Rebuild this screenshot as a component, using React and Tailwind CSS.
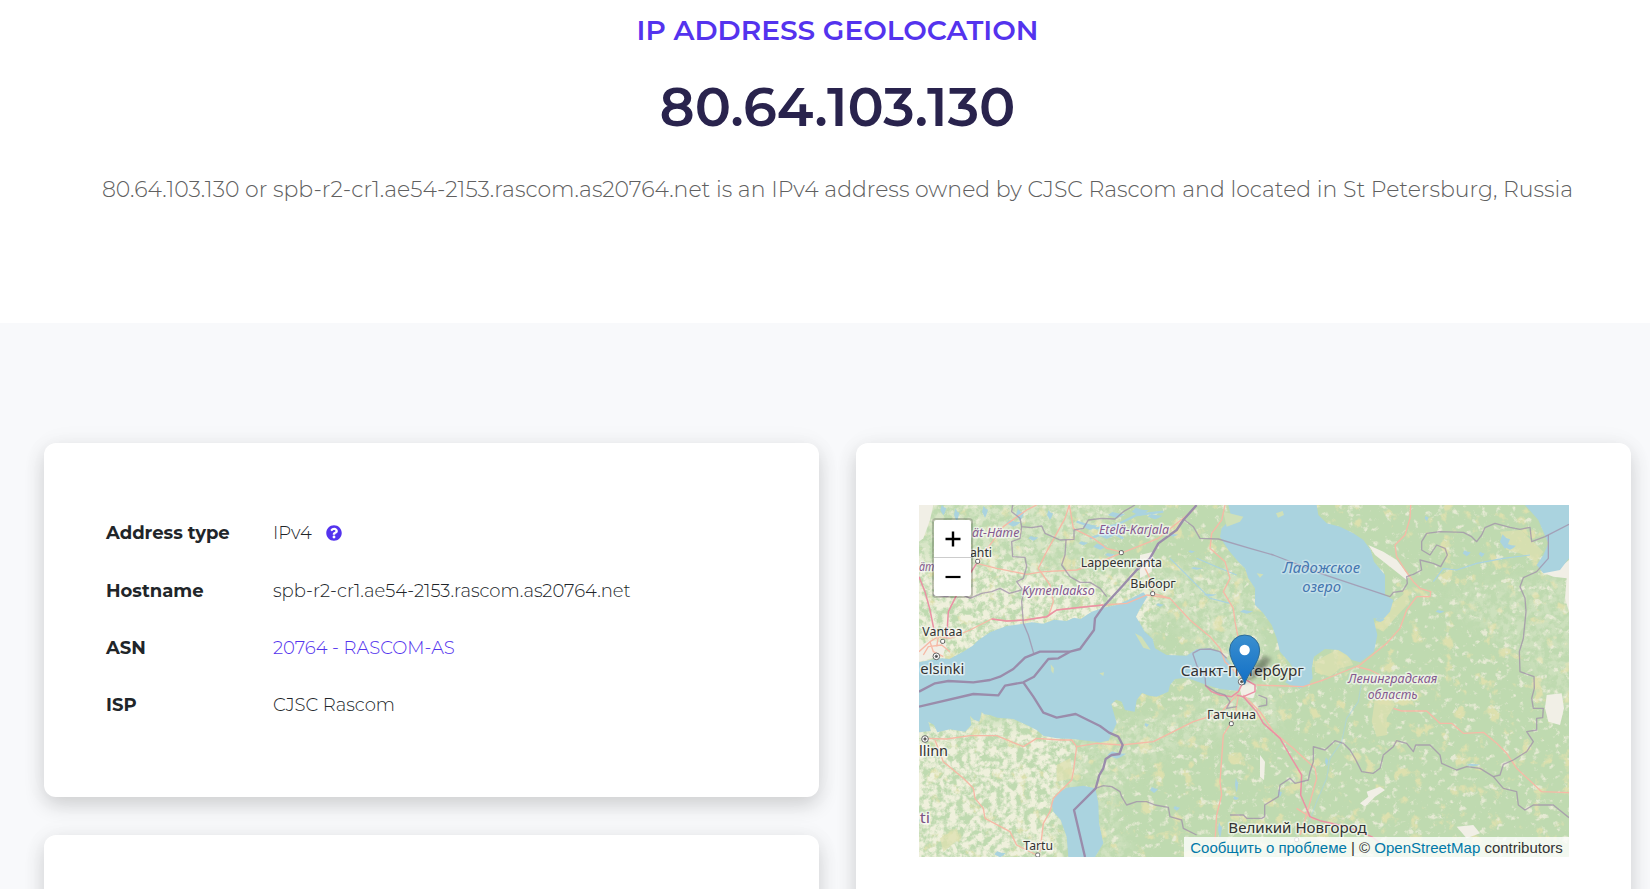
import { FaQuestionCircle } from "react-icons/fa";

const water = "#aad3df";

const borders = [
  "M860 30 820 75 800 105 745 145 720 190 680 225 640 270 580 335 555 370 552 405 510 462 480 470 390 470 345 488 310 522 270 545 240 555 190 562 115 558 75 565 27 590",
  "M480 470 445 490 415 492 372 545 340 562 285 572 265 601 190 597 27 635",
  "M340 562 370 605 400 653 440 668 497 657 570 693 597 713 625 725 638 750 628 777 605 780 587 792 580 820 568 840 557 880 492 945 525 1086",
];

const minorBorders = [
  "M308 30 305 50 330 70 335 95 365 98 395 93 405 115 450 135 492 133 492 105 520 100 535 75 575 70 615 72 640 50 675 30",
  "M335 95 330 130 305 140 308 185 345 187 350 215 340 250 320 260 342 290 335 320 340 385 355 420 372 478",
  "M70 300 110 305 145 293 180 310 215 295 245 290 270 280 298 295 335 285",
  "M468 135 465 180 455 210 480 245 510 262 540 262 570 280 590 305",
  "M820 72 850 95 870 130 925 132 1020 160 1090 180 1240 238 1440 305",
  "M1440 305 1450 292 1478 288 1492 265 1490 245 1510 238 1535 225 1530 195 1570 205 1592 215 1612 180 1605 160 1580 150 1560 180 1535 165 1535 140 1550 115 1590 110 1660 112 1685 125 1700 140 1715 120 1725 98 1755 85 1800 97 1830 103 1860 97 1865 140 1905 125 1977 88",
  "M1915 120V190L1880 230 1840 248 1830 275 1845 310 1848 350 1840 430 1828 470 1830 530 1872 545 1873 580 1865 610 1870 640 1900 640 1898 668 1880 670 1880 705 1850 710 1870 740 1850 770 1810 795 1780 808 1770 840 1750 845",
  "M848 475 870 463 900 462 930 470 950 490M848 475 862 515 885 540 887 572 920 592 945 600 960 620 950 640 980 635",
  "M557 880 580 872 605 875 630 890 635 905 650 930 680 920 710 920 735 930 775 937 780 965 815 975 820 1000 860 1020",
  "M960 960 1000 960 1010 970 1055 970 1064 965 1064 930 1105 905 1110 870 1140 850 1155 865 1195 855 1200 830 1210 800 1210 755 1245 765 1275 737 1300 745 1320 765 1335 790 1355 830 1390 835 1410 820 1420 780 1450 755 1460 737 1490 745 1510 770 1517 750 1560 750 1590 780 1595 805 1640 825 1670 815 1710 820 1750 845 1780 880 1820 890 1825 930 1845 945 1870 930 1930 930 1977 968",
  "M1045 600 1070 610 1070 630 1045 635",
];

const roads = [
  "M27 470 60 440 85 425 120 430 180 405 245 372 290 378 345 375 410 365 440 345 500 338 580 330",
  "M200 205 280 95 350 45 380 30",
  "M200 205 260 220 350 238 400 230 500 225 570 200 640 172 745 130 850 45",
  "M478 30 465 70 410 170 385 220 420 270 430 320 415 365",
  "M478 30 490 100 550 130 590 160 640 172",
  "M945 30 935 75 905 115 900 160 945 200 960 250 940 290 970 340 975 380 985 430",
  "M580 330 650 325 710 300 780 310 840 375 900 425 930 460 945 500 975 530",
  "M700 210 720 250 730 295 780 310",
  "M1502 30 1500 70 1485 120 1455 150 1460 185 1485 225 1510 260 1530 280 1562 290 1560 305 1520 305 1490 345 1470 400 1430 445 1350 510 1240 555 1180 575 1040 570",
  "M1340 515 1380 525 1410 540M1450 640 1475 648 1550 648 1590 685 1625 685 1660 715 1720 712 1760 745 1790 775 1820 820 1895 890 1977 893",
  "M45 730 110 732 180 722 260 722 340 755 380 730 450 735 485 735 500 755 560 745 636 750 730 740 790 710 850 680 930 655 980 600",
  "M75 735 100 800 160 850 190 880 195 910 220 940 225 970 300 1010 320 1050 380 1080",
  "M500 755 490 830 485 855 430 910 420 950 400 985 390 1070",
  "M985 600 975 665 940 720 930 860 935 900 920 960 915 1040",
  "M1000 600 1050 650 1090 710 1150 760 1215 820 1220 850 1185 975 1170 1020M1215 975 1160 940",
  "M40 480 55 455 95 450 120 470M60 440 70 470 100 485M85 425 80 455",
];

const motorways = [
  "M1000 605 1040 650 1060 685 1110 730 1145 790 1175 840 1172 900 1200 965 1230 977 1310 995 1385 1025 1430 1060",
  "M885 570 905 590 930 600 965 605 985 590 1000 560M975 530 1000 550 1035 570 1035 590 1000 605 980 600",
  "M110 430 115 350 145 290 200 205",
  "M27 245 45 290 60 345 75 420",
];

const lakes = [
  [540, 95, 22, 10], [590, 120, 28, 12], [570, 155, 20, 9], [630, 100, 25, 8], [620, 60, 26, 9], [690, 50, 25, 12],
  [735, 65, 22, 8], [520, 145, 14, 6], [600, 180, 15, 6], [100, 45, 9, 16], [140, 60, 8, 20], [225, 50, 9, 18],
  [310, 85, 22, 10], [330, 60, 12, 18], [370, 130, 15, 7], [420, 60, 9, 14], [270, 110, 10, 8], [790, 120, 15, 5],
  [860, 220, 18, 4], [900, 300, 20, 4], [750, 330, 12, 5], [845, 170, 10, 4], [620, 780, 28, 11], [732, 885, 12, 9],
  [980, 870, 5, 22], [978, 910, 9, 6], [1785, 140, 15, 22], [1800, 155, 18, 9], [1670, 175, 12, 9], [1715, 178, 9, 8],
  [1590, 350, 13, 5], [1690, 810, 20, 4], [1110, 895, 6, 10], [270, 1078, 17, 9], [1170, 568, 34, 12], [1010, 350, 20, 6],
  [1250, 800, 5, 14], [930, 1005, 6, 25], [800, 940, 10, 7], [1550, 70, 6, 8], [710, 690, 7, 6], [1410, 375, 15, 6],
];

const pale = [
  "M1375 150 1420 170 1460 195 1495 240 1490 255 1440 215 1395 180Z",
  "M1890 230 1940 225 1977 195 1977 350 1965 310 1970 250 1930 245Z",
  "M1910 600 1955 595 1962 640 1950 690 1915 680 1905 640Z",
  "M1370 890 1410 875 1425 885 1395 905 1365 935 1350 925 1375 905Z",
  "M985 560 1020 555 1040 580 1030 610 995 605Z",
  "M27 455 60 435 110 445 100 480 27 500Z",
  "M1640 995 1690 990 1710 1015 1670 1030Z",
  "M27 30 70 30 60 75 40 130 27 140Z",
  "M1050 780 1065 800 1062 855 1050 845Z",
  "M690 180 730 170 725 230 690 250Z",
];

const places = [
  { t: "Lappeenranta", x: 512, y: 216, w: 244, s: 37 },
  { t: "Выборг", x: 661, y: 279, w: 136, s: 37 },
  { t: "Vantaa", x: 37, y: 424, w: 120, s: 36 },
  { t: "elsinki", x: 31, y: 536, w: 132, s: 42 },
  { t: "ahti", x: 180, y: 185, w: 66, s: 36 },
  { t: "Санкт-Петербург", x: 812, y: 542, w: 370, s: 42 },
  { t: "Гатчина", x: 891, y: 671, w: 147, s: 36 },
  { t: "llinn", x: 27, y: 784, w: 87, s: 42 },
  { t: "Tartu", x: 340, y: 1065, w: 89, s: 36 },
  { t: "Великий Новгород", x: 955, y: 1015, w: 415, s: 42 },
];

const regions = [
  { t: "ät-Häme", x: 186, y: 125, w: 142, s: 36 },
  { t: "äm", x: 27, y: 228, w: 46, s: 36 },
  { t: "Etelä-Karjala", x: 567, y: 116, w: 210, s: 37 },
  { t: "Kymenlaakso", x: 336, y: 300, w: 218, s: 37 },
  { t: "Ленинградская", x: 1314, y: 565, w: 268, s: 36 },
  { t: "область", x: 1373, y: 611, w: 150, s: 36 },
];

function Turbulence({ id, freq, seed, color, slope, offset }) {
  return (
    <filter id={id} x="0" y="0" width="100%" height="100%" colorInterpolationFilters="sRGB">
      <feTurbulence type="fractalNoise" baseFrequency={freq} numOctaves="5" seed={seed} />
      <feColorMatrix values={`0 0 0 0 0  0 0 0 0 0  0 0 0 0 0  ${slope} 0 0 0 ${offset}`} result="m" />
      <feFlood floodColor={color} />
      <feComposite operator="in" in2="m" />
    </filter>
  );
}

function MapTiles() {
  return (
    <svg className="block h-[352px] w-[650px]" viewBox="27 30 1950 1056">
      <defs>
        <Turbulence id="fields" freq="0.05" seed="4" color="#eff0dc" slope="4" offset="-1.5" />
        <Turbulence id="clearings" freq="0.045" seed="11" color="#e6ead4" slope="5" offset="-3" />
        <Turbulence id="marsh" freq="0.022" seed="23" color="#dde0ae" slope="7" offset="-4.3" />
        <linearGradient id="pin" x1="0" y1="0" x2="0" y2="1">
          <stop offset="0" stopColor="#3a8fcf" />
          <stop offset="1" stopColor="#126fc6" />
        </linearGradient>
        <filter id="soft"><feGaussianBlur stdDeviation="7" /></filter>
        <filter id="feather"><feGaussianBlur stdDeviation="26" /></filter>
        <mask id="farmland" maskUnits="userSpaceOnUse" x="27" y="30" width="1950" height="1056">
          <g fill="#fff" filter="url(#feather)">
            <path d="M-60 200 300 190 480 240 650 220 780 300 690 440-60 560Z" />
            <path d="M-60 680H480L520 800 450 900 480 1180H-60Z" />
            <path d="M-60-30H640L560 180-60 220Z" opacity=".5" />
            <path d="M560 700 850 650 1080 560 1120 700 950 700 700 800 600 900 680 1180H540Z" opacity=".4" />
            <path d="M700 230 1000 200 1080 540 900 520Z" opacity=".4" />
            <path d="M1600 300 2000 230V700L1850 500Z" opacity=".3" />
          </g>
        </mask>
      </defs>
      <rect x="27" y="30" width="1950" height="1056" fill="#bfdab0" />
      <rect x="27" y="30" width="1950" height="1056" filter="url(#marsh)" />
      <rect x="27" y="30" width="1950" height="1056" filter="url(#clearings)" />
      <g mask="url(#farmland)">
        <rect x="27" y="30" width="1950" height="1056" filter="url(#fields)" />
      </g>
      <g fill="#dde0b0" opacity=".75">
        <path d="M1395 610 1440 600 1455 630 1430 670 1432 720 1400 725 1385 680ZM1215 500 1250 480 1280 465 1310 470 1330 510 1290 520 1260 545 1215 530ZM1770 110 1830 105 1870 140 1900 170 1880 200 1830 175 1790 165ZM1440 330 1490 290 1500 320 1450 375 1420 410 1400 400 1410 370Z" />
        <path d="M440 810 480 790 490 850 440 860ZM90 1030 140 1000 150 1030 100 1070Z" />
      </g>
      <g fill="#f1efe6">{pale.map((d) => <path key={d} d={d} />)}</g>
      <g fill={water}>
        <path d="M27 502 60 495 95 490 118 492 160 470 188 452 205 436 240 412 290 393 330 388 365 382 400 386 432 374 470 378 492 368 512 372 545 350 580 338 620 330 660 312 700 292 712 305 700 325 688 345 678 365 690 385 704 410 728 432 735 460 770 480 830 482 860 462 900 460 930 470 958 500 975 530 990 562 985 588 930 582 890 570 830 548 795 552 780 570 775 590 740 605 718 602 696 594 680 615 674 650 645 645 635 620 618 614 604 628 613 660 620 685 606 715 595 737 570 742 530 737 490 732 440 730 400 722 380 705 350 690 310 672 262 668 240 660 222 658 215 650 208 680 192 674 180 662 184 690 165 710 120 703 82 712 72 690 55 680 62 708 27 712Z" />
        <path d="M955 30H1220L1225 60 1250 85 1290 95 1330 115 1360 135 1382 165 1392 200 1425 240 1425 300 1450 315 1440 350 1420 372 1390 370 1402 420 1392 470 1350 502 1325 495 1310 480 1285 465 1245 462 1212 485 1205 520 1208 550 1190 573 1140 570 1125 562 1155 530 1140 505 1110 470 1100 430 1085 390 1060 355 1035 330 1035 280 1015 250 1005 220 985 200 955 165 930 125 935 100 965 70Z" />
        <path d="M1845 30H1977V190L1950 225 1900 235 1880 210 1900 180 1915 145 1900 110 1885 75Z" />
        <path d="M425 925 440 897 470 878 520 872 556 880 565 925 567 985 580 1045 555 1086H475L470 1025 452 975 430 950Z" />
        {lakes.map(([x, y, rx, ry]) => (
          <path key={`${x}-${y}`} d={`M${x - rx} ${y} L${x - rx / 2} ${y - ry} L${x + rx / 4} ${y - ry / 2} L${x + rx} ${y - ry / 3} L${x + rx / 2} ${y + ry / 2} L${x} ${y + ry} Z`} />
        ))}
      </g>
      <g fill="#cfe0b8">
        <path d="M675 415 695 425 722 465 700 458ZM422 508 432 520 430 536 424 528ZM568 535 582 532 580 543ZM1098 55 1118 48 1122 60 1104 68ZM940 50 1000 65 990 80 950 95ZM1040 235 1060 238 1050 248Z" />
      </g>
      <g fill="none" stroke={water} strokeWidth="3.5">
        <path d="M975 575 1010 560M1355 560 1345 620 1310 670 1295 740 1260 790 1250 850 1220 920 1190 1000" strokeOpacity=".6" />
        <path d="M1640 225 1700 205 1780 190 1860 180M1570 260 1600 220 1640 225M860 190 930 220 980 240M780 190 850 260 900 310 960 325" />
        <path d="M500 80 560 100 620 90 680 60 760 50M540 130 600 110 640 130" strokeWidth="7" />
      </g>
      <g fill="none" stroke="#f6b9a6" strokeWidth="4" strokeLinejoin="round">{roads.map((d) => <path key={d} d={d} />)}</g>
      <g fill="none" stroke="#ea91a4" strokeWidth="4.5" strokeLinejoin="round">{motorways.map((d) => <path key={d} d={d} />)}</g>
      <path d="M245 372 290 378 345 375 410 365 440 345 500 338 580 330" fill="none" stroke="#ea91a4" strokeWidth="4.5" />
      <g fill="none" stroke="#a08fa9" strokeOpacity=".75" strokeWidth="4" strokeLinejoin="round">{minorBorders.map((d) => <path key={d} d={d} />)}</g>
      <g fill="none" stroke="#9a8cab" strokeWidth="7" strokeLinejoin="round">{borders.map((d) => <path key={d} d={d} />)}</g>
      <g fill="#fff" stroke="#666" strokeWidth="3">
        {[[634, 173], [728, 296], [98, 439], [203, 199], [964, 686], [383, 1080], [1160, 1034]].map(([x, y]) => (
          <rect key={x} x={x - 6} y={y - 6} width="12" height="12" rx="4" />
        ))}
        {[[79, 484], [45, 732], [995, 560]].map(([x, y]) => (
          <g key={x}><circle cx={x} cy={y} r="10" /><circle cx={x} cy={y} r="3.5" fill="#444" /></g>
        ))}
      </g>
      <g className="font-['Noto_Sans',sans-serif]" strokeLinejoin="round" paintOrder="stroke" stroke="#fff" strokeOpacity=".6" strokeWidth="9">
        <g fill="#333">
          {places.map((p) => <text key={p.t} x={p.x} y={p.y} fontSize={p.s} textLength={p.w} lengthAdjust="spacingAndGlyphs">{p.t}</text>)}
        </g>
        <g fill="#85598f" fontStyle="italic">
          {regions.map((p) => <text key={p.t} x={p.x} y={p.y} fontSize={p.s} textLength={p.w} lengthAdjust="spacingAndGlyphs">{p.t}</text>)}
        </g>
        <text x="29" y="985" fontSize="42" fill="#7d5585" textLength="31" lengthAdjust="spacingAndGlyphs">ti</text>
        <g fill="#4576b0" fontStyle="italic" fontSize="41" strokeOpacity=".3">
          <text x="1118" y="234" textLength="232" lengthAdjust="spacingAndGlyphs">Ладожское</text>
          <text x="1177" y="290" textLength="116" lengthAdjust="spacingAndGlyphs">озеро</text>
        </g>
      </g>
      <path d="M1004 568 1030 515 1062 482 1084 492 1062 528Z" opacity=".35" filter="url(#soft)" />
      <path d="M1004 568C998 538 959 505 959 465A45 45 0 0 1 1049 465C1049 505 1010 538 1004 568Z" fill="url(#pin)" stroke="#2e6c97" strokeWidth="3" />
      <circle cx="1004" cy="465" r="15.5" fill="#fff" />
    </svg>
  );
}

const rows = [
  { label: "Address type", value: <>IPv4<FaQuestionCircle className="ml-[14px] size-4 text-[#5433ee]" /></> },
  { label: "Hostname", value: "spb-r2-cr1.ae54-2153.rascom.as20764.net" },
  { label: "ASN", value: <a className="text-[#5433ee]">20764 - RASCOM-AS</a> },
  { label: "ISP", value: "CJSC Rascom" },
];

const card = "rounded-xl bg-white shadow-[0_8px_20px_rgba(0,0,0,0.16),0_0_30px_rgba(0,0,0,0.03)]";

export default function App() {
  return (
    <div className="h-[889px] w-[1650px] overflow-hidden bg-[#f8f9fb] font-[Montserrat,Inter,sans-serif] text-[#212529]">
      <header className="flex h-[323px] flex-col items-center bg-white pl-[25px] whitespace-nowrap">
        <h2 className="mt-[10px] text-[28px] leading-10 font-semibold text-[#5433ee]">IP ADDRESS GEOLOCATION</h2>
        <h1 className="mt-[25px] text-[54px] leading-16 font-semibold text-[#29234d]">80.64.103.130</h1>
        <p className="mt-[35px] text-[22px] leading-8 font-light text-[#606060]">
          80.64.103.130 or spb-r2-cr1.ae54-2153.rascom.as20764.net is an IPv4 address owned by CJSC Rascom and located in St Petersburg, Russia
        </p>
      </header>
      <main className="flex gap-[37px] pt-[120px] pl-11">
        <div className="flex w-[775px] flex-col gap-[38px]">
          <section className={`h-[354px] px-[62px] pt-[61px] ${card}`}>
            <dl className="text-lg">
              {rows.map((r) => (
                <div key={r.label} className="flex h-[57px] items-center first:h-[58px]">
                  <dt className="w-[167px] font-bold">{r.label}</dt>
                  <dd className="flex items-center font-light">{r.value}</dd>
                </div>
              ))}
            </dl>
          </section>
          <section className={`h-[300px] ${card}`} />
        </div>
        <section className={`h-[600px] w-[775px] px-[63px] pt-[62px] ${card}`}>
          <div className="relative h-[352px] w-[650px] overflow-hidden">
            <MapTiles />
            <div className="absolute top-[13px] left-[13px] flex w-[41px] flex-col rounded-[4px] border-2 border-black/20 bg-white bg-clip-padding text-black">
              <button className="flex h-[38px] items-center justify-center border-b border-[#ccc]" aria-label="Zoom in">
                <svg className="size-4" viewBox="0 0 16 16"><path d="M0.5 8H15.5M8 0.5V15.5" stroke="#000" strokeWidth="2.4" /></svg>
              </button>
              <button className="flex h-[38px] items-center justify-center" aria-label="Zoom out">
                <svg className="size-4" viewBox="0 0 16 16"><path d="M0.5 8H15.5" stroke="#000" strokeWidth="2.2" /></svg>
              </button>
            </div>
            <div className="absolute right-0 bottom-0 flex h-5 w-[385px] items-center justify-center bg-white/80 pt-[2px] font-['Liberation_Sans',sans-serif] text-[15px] leading-[18px] whitespace-pre text-[#333]">
              <a className="text-[#0078a8]">Сообщить о проблеме</a> | © <a className="text-[#0078a8]">OpenStreetMap</a> contributors
            </div>
          </div>
        </section>
      </main>
    </div>
  );
}
